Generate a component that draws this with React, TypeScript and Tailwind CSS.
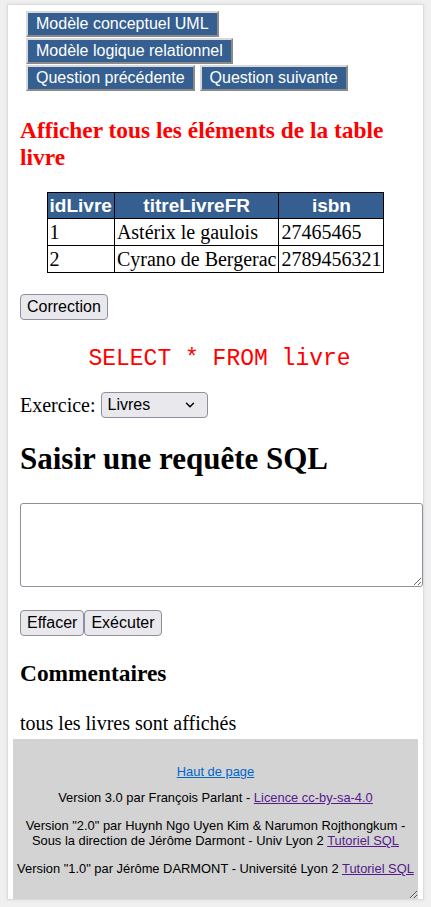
import { ChevronDown } from "lucide-react";

const NAV_ROWS = [
  ["Modèle conceptuel UML"],
  ["Modèle logique relationnel"],
  ["Question précédente", "Question suivante"],
];

const LIVRES = [
  { id: "1", titre: "Astérix le gaulois", isbn: "27465465" },
  { id: "2", titre: "Cyrano de Bergerac", isbn: "2789456321" },
];

const serif = "font-['Liberation_Serif','Times_New_Roman',serif]";
const sans = "font-['Liberation_Sans',Arial,sans-serif]";
const nativeBtn =
  "h-[26px] rounded-[4px] border border-[#8f8f9d] bg-[#e9e9ed] px-[6px] text-[16px] leading-none text-black font-['Liberation_Sans',Arial,sans-serif]";

export default function App() {
  return (
    <div className={`min-h-screen bg-[#f0f0f0] pt-[4px] pb-[8px] ${serif}`}>
      <div className="mx-[7px] border border-[#dcdcdc] bg-white px-[5px] shadow-[0_0_4px_rgba(0,0,0,0.08)]">
        <div className="px-[7px] pt-[6px]">
          {/* navigation */}
          <div className="ml-[6px] flex flex-col gap-[1px]">
            {NAV_ROWS.map((row, i) => (
              <div key={i} className="flex gap-[5px]">
                {row.map((label) => (
                  <button
                    key={label}
                    className={`h-[26px] border-2 border-t-[#d8d8d8] border-l-[#d8d8d8] border-b-[#8a8a8a] border-r-[#8a8a8a] bg-[#365f91] px-[8px] text-[16px] leading-none text-white ${sans}`}
                  >
                    {label}
                  </button>
                ))}
              </div>
            ))}
          </div>

          <h3 className="mt-[26px] text-[23.4px] font-bold leading-[27px] text-[#ff0000]">
            Afficher tous les éléments de la table livre
          </h3>

          <table className="mx-auto mt-[21px] border-collapse text-[20px] leading-[25px]">
            <thead>
              <tr className={`bg-[#365f91] text-white ${sans} text-[19px] font-bold`}>
                <th className="h-[25px] border border-black px-[2px] py-0">idLivre</th>
                <th className="border border-black px-[2px] py-0">titreLivreFR</th>
                <th className="border border-black px-[2px] py-0">isbn</th>
              </tr>
            </thead>
            <tbody>
              {LIVRES.map((l) => (
                <tr key={l.id} className="h-[27px]">
                  <td className="border border-black px-[2px]">{l.id}</td>
                  <td className="border border-black px-[2px]">{l.titre}</td>
                  <td className="border border-black px-[2px]">{l.isbn}</td>
                </tr>
              ))}
            </tbody>
          </table>

          <div className="mt-[21px]">
            <button className={nativeBtn}>Correction</button>
          </div>

          <p className="mt-[25px] pl-[8px] text-center font-['Liberation_Mono','Courier_New',monospace] text-[23px] leading-[28px] text-[#ff0000]">
            SELECT * FROM livre
          </p>

          <div className="mt-[19px] flex items-center gap-[5px] text-[20px] leading-[26px]">
            <span>Exercice:</span>
            <div className={`flex h-[26px] w-[107px] items-center justify-between rounded-[4px] border border-[#8f8f9d] bg-[#e9e9ed] pl-[6px] pr-[10px] text-[16px] ${sans}`}>
              <span>Livres</span>
              <ChevronDown size={14} strokeWidth={2.5} />
            </div>
          </div>

          <h1 className="mt-[22px] text-[31px] font-bold leading-[38px]">Saisir une requête SQL</h1>

          <textarea className="mt-[25px] block h-[84px] w-[403px] rounded-[3px] border border-[#8f8f9d] bg-white" />

          <div className="mt-[23px] flex">
            <button className={nativeBtn}>Effacer</button>
            <button className={nativeBtn}>Exécuter</button>
          </div>

          <h2 className="mt-[23px] text-[23.4px] font-bold leading-[28px]">Commentaires</h2>

          <p className="mt-[24px] text-[20px] leading-[24px]">tous les livres sont affichés</p>
        </div>

        {/* footer */}
        <footer className={`resize overflow-auto mt-[4px] h-[160px] bg-[#d3d3d3] pt-[25px] text-center text-[12.9px] leading-[15px] text-black ${sans}`}>
          <p>
            <a href="#" className="text-[#0066cc] underline">Haut de page</a>
          </p>
          <p className="mt-[11px]">
            Version 3.0 par François Parlant -{" "}
            <a href="#" className="text-[#551a8b] underline">Licence cc-by-sa-4.0</a>
          </p>
          <p className="mt-[13px] px-[4px]">
            Version "2.0" par Huynh Ngo Uyen Kim &amp; Narumon Rojthongkum - Sous la direction de Jérôme Darmont - Univ Lyon 2{" "}
            <a href="#" className="text-[#551a8b] underline">Tutoriel SQL</a>
          </p>
          <p className="mt-[13px]">
            Version "1.0" par Jérôme DARMONT - Université Lyon 2{" "}
            <a href="#" className="text-[#551a8b] underline">Tutoriel SQL</a>
          </p>
        </footer>
      </div>
    </div>
  );
}
